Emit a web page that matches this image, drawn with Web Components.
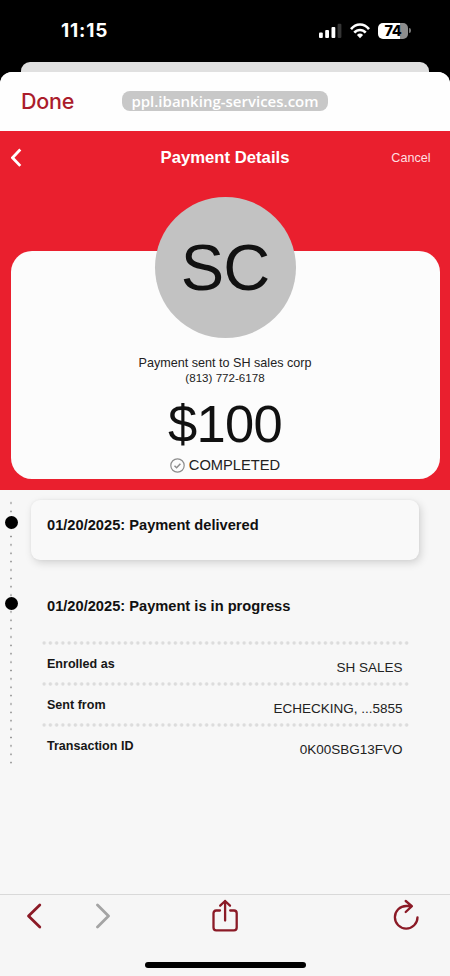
<!DOCTYPE html>
<html lang="en">
<head>
<meta charset="utf-8">
<title>Payment Details</title>
<style>
  html, body { margin: 0; background: #f7f7f7; }
  body { font-family: "Liberation Sans", Arial, sans-serif; color: #161616; }
</style>
</head>
<body>
<phone-screen>
  <status-bar slot="status" time="11:15" battery="74"></status-bar>
  <browser-header slot="header" action="Done">ppl.ibanking-services.com</browser-header>
  <payment-hero heading="Payment Details" action="Cancel" initials="SC">
    <payment-summary amount="$100" status="COMPLETED">
      <span slot="to">Payment sent to SH sales corp</span>
      <span slot="phone">(813) 772-6178</span>
    </payment-summary>
  </payment-hero>
  <payment-timeline>
    <timeline-event raised>01/20/2025: Payment delivered</timeline-event>
    <timeline-event>01/20/2025: Payment is in progress</timeline-event>
    <detail-list>
      <detail-row label="Enrolled as">SH SALES</detail-row>
      <detail-row label="Sent from">ECHECKING, ...5855</detail-row>
      <detail-row label="Transaction ID">0K00SBG13FVO</detail-row>
    </detail-list>
  </payment-timeline>
  <browser-toolbar slot="footer"></browser-toolbar>
</phone-screen>
<script>
const define = (name, render) => customElements.define(name, class extends HTMLElement {
  constructor() {
    super();
    this.attachShadow({ mode: "open" });
  }
  connectedCallback() {
    const t = document.createElement("template");
    t.innerHTML = render(k => this.getAttribute(k) || "");
    this.shadowRoot.replaceChildren(t.content.cloneNode(true));
  }
});

define("phone-screen", () => `
  <style>
    :host { display: flex; flex-direction: column; width: 450px; height: 976px; background: #000; overflow: hidden; }
    .behind { height: 10px; margin: 0 21px; background: #e0e0e0; border-radius: 9px 9px 0 0; }
    .sheet { flex: 1; display: flex; flex-direction: column; background: #f7f7f7; border-radius: 12px 12px 0 0; overflow: hidden; }
    main { flex: 1; }
  </style>
  <slot name="status"></slot>
  <div class="behind"></div>
  <div class="sheet">
    <slot name="header"></slot>
    <main><slot></slot></main>
    <slot name="footer"></slot>
  </div>`);

define("status-bar", a => `
  <style>
    :host { display: flex; height: 62px; box-sizing: border-box; padding: 18px 39px 0 61px; justify-content: space-between; color: #fff; }
    .time { font: 700 19px/26px Inter, sans-serif; letter-spacing: .85px; }
    .icons { display: flex; height: 25px; align-items: center; }
    .battery { display: grid; place-items: center; width: 30px; height: 16px; margin-left: 8px; border-radius: 5px;
      background: linear-gradient(90deg, #fff 74%, #8d8d8d 74%); color: #000; font: 800 14.5px/16px Inter, sans-serif; letter-spacing: -.4px; }
    .cap { width: 2px; height: 5px; margin-left: 1px; border-radius: 0 2px 2px 0; background: #777; }
  </style>
  <span class="time">${a("time")}</span>
  <span class="icons">
    <svg width="23" height="16" viewBox="0 0 23 16" fill="#fff"><rect x="0" y="9.5" width="3.8" height="5.5" rx="1"/><rect x="6.2" y="7" width="3.8" height="8" rx="1"/><rect x="12.5" y="4" width="3.8" height="11" rx="1"/><rect x="18.6" y="0.8" width="3.8" height="14.2" rx="1" fill="#353535"/></svg>
    <svg style="margin-left:8px" width="20" height="16" viewBox="0 0 20 16" fill="none" stroke="#fff" stroke-width="2.6"><path d="M1 6.1C6-.1 14-.1 19 6.1"/><path d="M4.3 9.7C7.5 6 12.500 6 15.700 9.700"/><path d="M10 15.200 6.900 12Q10 9.200 13.100 12Z" fill="#fff" stroke="none"/></svg>
    <span class="battery">${a("battery")}</span><span class="cap"></span>
  </span>`);

define("browser-header", a => `
  <style>
    :host { display: grid; grid-template-columns: 100px 1fr 100px; height: 59px; flex: none; box-sizing: border-box; align-items: start; background: #fefefe; }
    .done { padding: 14px 0 0 21px; color: #ab1c2b; font: 500 21.5px/30px Inter, sans-serif; letter-spacing: -.25px; }
    .url { justify-self: center; width: 206px; height: 20px; margin-top: 19px; border-radius: 8px; background: #c8c8c8;
      color: #fff; text-align: center; font: 600 15px/21px "Open Sans", sans-serif; white-space: nowrap; }
  </style>
  <span class="done">${a("action")}</span>
  <span class="url"><slot></slot></span>`);

define("payment-hero", a => `
  <style>
    :host { display: block; height: 359px; box-sizing: border-box; padding: 0 10.5px; background: #ea1f2e; }
    header { display: grid; grid-template-columns: 80px 1fr 80px; align-items: center; height: 54px; color: #fff; }
    svg { display: block; }
    h1 { margin: 0; font-size: 16.7px; line-height: 20px; text-align: center; white-space: nowrap; }
    .cancel { justify-self: end; margin-right: 9px; font-size: 12.6px; line-height: 16px; color: #ffdfe1; }
    .avatar { position: relative; z-index: 1; display: grid; place-items: center; width: 141px; height: 141px; margin: 12px auto -87px;
      border-radius: 50%; background: #c2c2c2; font-size: 65px; line-height: 139px; letter-spacing: -1px; color: #111; }
  </style>
  <header>
    <svg width="12" height="20" viewBox="0 0 12 20" fill="none" stroke="#fff" stroke-width="2.8"><path d="M9.300 1.500 1.500 9.700l7.800 8.200"/></svg>
    <h1>${a("heading")}</h1>
    <span class="cancel">${a("action")}</span>
  </header>
  <div class="avatar">${a("initials")}</div>
  <slot></slot>`);

define("payment-summary", a => `
  <style>
    :host { display: flex; flex-direction: column; align-items: center; height: 228px; box-sizing: border-box; padding-top: 105px; background: #fcfcfc; border-radius: 21px; white-space: nowrap; color: #222; }
    .to { font-size: 12.6px; line-height: 15px; }
    .phone { font-size: 11.6px; line-height: 14px; }
    .amount { margin-top: 12px; font-size: 52.5px; line-height: 54px; letter-spacing: -.7px; color: #111; }
    .status { display: flex; align-items: center; gap: 4px; margin-top: 5px; font-size: 14.7px; line-height: 18px; }
  </style>
  <div class="to"><slot name="to"></slot></div>
  <div class="phone"><slot name="phone"></slot></div>
  <div class="amount">${a("amount")}</div>
  <div class="status">
    <svg width="15" height="15" viewBox="0 0 15 15" fill="none" stroke="#8c8c8c" stroke-width="1.2"><circle cx="7.5" cy="7.5" r="6.7"/><path d="m4.5 7.7 2.1 2 3.8-4" stroke-width="1.5"/></svg>
    <span>${a("status")}</span>
  </div>`);

define("payment-timeline", () => `
  <style>
    :host { display: block; padding: 10px 31px 0 5px; }
    .track { height: 264.5px;
      background: radial-gradient(circle, #999 0 .6px, #99999900 1.2px) 4px -1.2px / 4px 8.377px repeat-y; }
  </style>
  <div class="track"><slot></slot></div>`);

define("timeline-event", () => `
  <style>
    :host { display: flex; height: 60px; margin-bottom: 20.5px; color: #111; }
    .dot { flex: none; width: 13px; height: 13px; margin: 16px 13px 0 0; border-radius: 50%; background: #000; }
    .body { flex: 1; padding: 15px 16px 0; border-radius: 9px; font-size: 14.65px; line-height: 20px; font-weight: 700; white-space: nowrap; }
    :host([raised]) .body { background: #f9f9f9; box-shadow: 2px 3px 9px #00000026, 0 0 3px #0000000c; }
  </style>
  <span class="dot"></span><div class="body"><slot></slot></div>`);

define("detail-list", () => `
  <style>:host { display: block; margin: -20px 9px 0 35.5px; }</style>
  <slot></slot>`);

define("detail-row", a => `
  <style>
    :host { display: flex; justify-content: space-between; height: 40.8px; box-sizing: border-box; padding: 15px 7.5px 0 6.5px; white-space: nowrap;
      background: radial-gradient(circle, #dcdcdc 0 1.3px, #dcdcdc00 2.1px) 0 0 / 6.265px 4px repeat-x; }
    .label { font-size: 12.55px; line-height: 16px; font-weight: 700; }
    .value { margin-top: 3px; font-size: 13.5px; line-height: 18px; color: #222; }
  </style>
  <span class="label">${a("label")}</span><span class="value"><slot></slot></span>`);

define("browser-toolbar", () => `
  <style>
    :host { display: block; height: 82px; box-sizing: border-box; border-top: 1px solid #d9d9d9; background: #f6f6f6; }
    nav { display: flex; height: 42px; padding: 0 30px 0 26px; align-items: center; }
    svg { display: block; fill: none; stroke: #8b1a26; stroke-width: 2.3; stroke-linecap: round; stroke-linejoin: round; }
    .chevron { stroke-width: 2.8; }
    .home { width: 161px; height: 6px; margin: 25px 0 0 145px; border-radius: 3px; background: #000; }
  </style>
  <nav>
    <svg class="chevron" width="16" height="26" viewBox="0 0 16 26"><path d="M13.800 2 2.500 13l11.300 11"/></svg>
    <svg class="chevron" style="margin-left:52px;stroke:#a4a4a4" width="16" height="26" viewBox="0 0 16 26"><path d="M3.500 2 14.500 13 3.500 24"/></svg>
    <svg style="margin-left:101px" width="28" height="34" viewBox="0 0 28 34"><path d="M9 11.500H5.200Q2.500 11.500 2.500 14.300V28.500q0 2.800 2.700 2.800H23q2.700 0 2.700-2.800V14.300Q25.700 11.500 23 11.500H19.200M14.100 21.500V2M9.200 6.700l4.900-4.700 4.900 4.700"/></svg>
    <svg style="margin-left:auto" width="28" height="34" viewBox="0 0 28 34"><path d="M25.500 18.300a11.300 11.300 0 1 1-11.300-11.300H19.500M13.700 2l6.200 5.200-6.200 5.800"/></svg>
  </nav>
  <div class="home"></div>`);
</script>
</body>
</html>
